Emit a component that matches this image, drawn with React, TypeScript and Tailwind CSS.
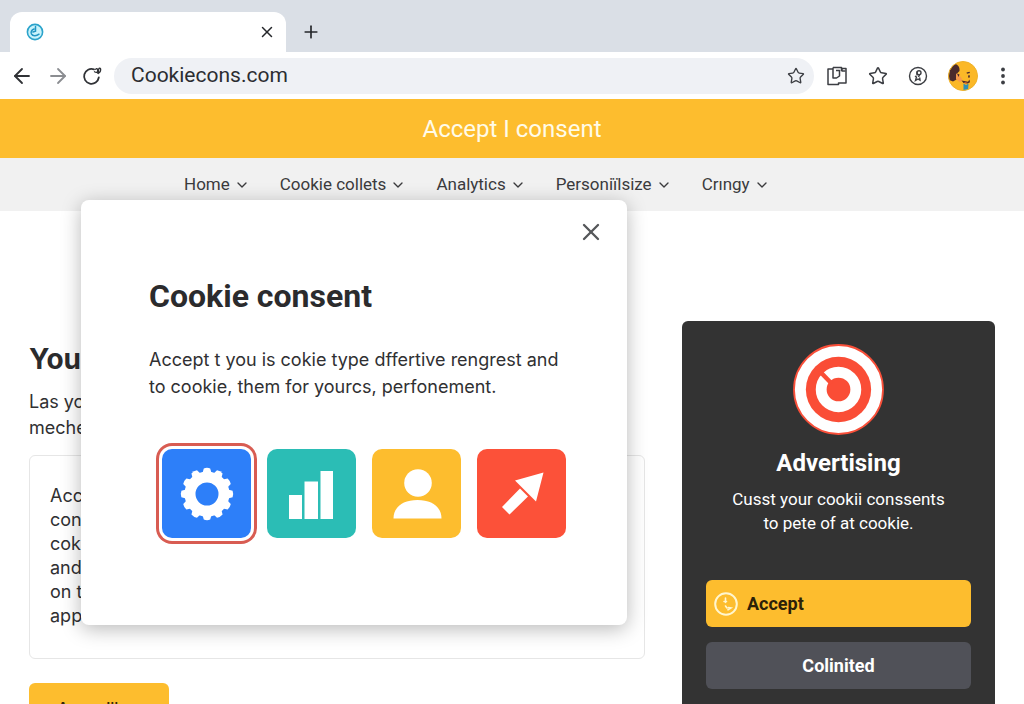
import { ArrowLeft, ArrowRight, ChevronDown, Plus, Star, X } from 'lucide-react';

const navItems = ['Home', 'Cookie collets', 'Analytics', 'Personiïlsize', 'Crıngy'];

function FaviconIcon() {
  return (
    <svg viewBox="0 0 18 18" className="size-[18px]" fill="none" aria-hidden="true">
      <circle cx="9" cy="9" r="7.6" fill="#c9f3fb" stroke="#2ba3cb" strokeWidth="1.6" />
      <path d="M9.5 3.500v4.800L7 9M8 6C5.400 7 4.600 9 5.400 10.800c1.200 2.400 5 2.400 7.600.4" stroke="#2196c4" strokeWidth="1.5" strokeLinecap="round" />
    </svg>
  );
}

function ReloadIcon() {
  return (
    <svg viewBox="0 0 20 20" className="size-5" fill="none" stroke="#303236" strokeWidth="1.8" strokeLinecap="round" aria-hidden="true">
      <path d="M12 3.400A7.400 7.400 0 1 0 16.800 11.500" />
      <path d="M12.500 5.800c2 1.200 3.200.6 3.200-1.600 0-1.800-1.700-2.200-2-.8M15.500 7c1.800.4 3-1.200 3.200-3.400.1-1.600-1.500-1.800-2-.6-.5 1.600-.2 2.800-.2 4.500" strokeWidth="1.300" />
    </svg>
  );
}

function CollectionsIcon() {
  return (
    <svg viewBox="0 0 22 22" className="size-[22px]" fill="none" stroke="#3c3e43" strokeWidth="1.5" strokeLinejoin="round" aria-hidden="true">
      <path d="M7 4H2v15.500h10.500V18H20V3.500h-4" />
      <path d="M7 2.500h8.500V6M7 2.500V13h3.500l3-2V5.500H10M16 3.500V6h3.500" />
    </svg>
  );
}

function BadgeIcon() {
  return (
    <svg viewBox="0 0 20 20" className="size-5" fill="none" stroke="#3c3e43" strokeWidth="1.4" aria-hidden="true">
      <circle cx="10" cy="10" r="8.500" />
      <circle cx="11" cy="6.800" r="2" />
      <path d="M9 5.500v4M11.500 8.800l-1 2.200M7 10l1.500 1-1 3.500 2.500-1.500 2 1.200-.3-2.700" />
    </svg>
  );
}

function Avatar() {
  return (
    <svg viewBox="0 0 30 30" className="size-[30px]" aria-hidden="true">
      <defs>
        <clipPath id="avatar-clip">
          <circle cx="15" cy="15" r="14.500" />
        </clipPath>
      </defs>
      <g clipPath="url(#avatar-clip)">
        <path fill="#fbb827" d="M0 0h30v30H0z" />
        <path fill="#4b2b2c" d="M0 3h7c3 .5 5 3 4.500 7L9 12.500l-.5 6-3.500 2-5-2z" />
        <path fill="#f79a4c" d="M8 13c2-1 3 0 3.500 1.500l2 2.500 1 3-3 1-3.500-3z" />
        <path fill="#4b2b2c" d="M9 12.500l2.500 1-1 2.500zM18.500 11.500l3-.8.500 1.200-3 .8zM20 14.500l1.800-.3v2.300l-1.500.3zM13.500 19.500l6.500 1.300 1.500-2.300.5 2.800-2.500 1.200-4-.5z" />
        <path fill="#f36c31" d="M16 21l3.500.8-1.800 1z" />
        <path fill="#2f8fb5" d="M15.500 22.500l2.500 1.500 2.500-1.500-.5 7.500h-4.500z" />
      </g>
      <circle cx="15" cy="15" r="14.500" fill="none" stroke="#efb22a" />
    </svg>
  );
}

function GearIcon() {
  return (
    <svg viewBox="-28 -28 56 56" className="size-14" fill="#fff" aria-hidden="true">
      {[0, 30, 60, 90, 120, 150, 180, 210, 240, 270, 300, 330].map((angle) => (
        <path key={angle} d="M-4.500-21L-3.200-25.600Q0-26.800 3.200-25.600L4.500-21z" transform={`rotate(${angle})`} />
      ))}
      <circle r="17" fill="none" stroke="#fff" strokeWidth="11" />
    </svg>
  );
}

function ChartIcon() {
  return (
    <svg viewBox="0 0 56 56" className="size-14" fill="#fff" aria-hidden="true">
      <path d="M5 29h13v24H5zM20.500 15.500H34V53H20.500zM36.500 5H49v48H36.500z" />
    </svg>
  );
}

function PersonIcon() {
  return (
    <svg viewBox="0 0 56 56" className="size-14" fill="#fff" aria-hidden="true">
      <circle cx="29" cy="17" r="13.800" />
      <path d="M4.500 52.500C4.500 41 14 34 28.500 34S52.500 41 52.500 52.500z" />
    </svg>
  );
}

function PointerIcon() {
  return (
    <svg viewBox="0 0 56 56" className="size-14" fill="#fff" aria-hidden="true">
      <path d="M49.500 6.500L42 35.500 21 14.500zM26 22.500L34 30.500 15.500 48.500 8 41z" />
    </svg>
  );
}

function TargetIcon() {
  return (
    <svg viewBox="0 0 92 92" className="size-[91px]" aria-hidden="true">
      <circle cx="46" cy="46" r="45" fill="#fff" stroke="#f94f39" strokeWidth="1.800" />
      <circle cx="46" cy="46" r="33" fill="#fa4d36" />
      <circle cx="46" cy="46" r="17.500" fill="none" stroke="#fff" strokeWidth="11" />
      <path d="M27 27.500L39 40" stroke="#fa4d36" strokeWidth="4.500" />
    </svg>
  );
}

function ClockIcon() {
  return (
    <svg viewBox="0 0 24 24" className="size-6" fill="none" stroke="#fff6cf" strokeWidth="2" aria-hidden="true">
      <circle cx="12" cy="12" r="10.800" />
      <path d="M11.500 6v4.500M10 9.500h2.500M11.500 14l1.500 2M14.500 15.500l2.500.5-3 1.800" strokeWidth="1.600" strokeLinecap="round" />
    </svg>
  );
}

const categories = [
  { name: 'Settings', color: 'bg-[#2d7ff9] ring-3 ring-[#d85c52] ring-offset-3', icon: <GearIcon /> },
  { name: 'Analytics', color: 'bg-[#2bbdb5]', icon: <ChartIcon /> },
  { name: 'Personal', color: 'bg-[#fdbd2e]', icon: <PersonIcon /> },
  { name: 'Marketing', color: 'bg-[#fc5139]', icon: <PointerIcon /> },
];

function BrowserBar() {
  return (
    <header className="bg-[#dadfe6] pt-3">
      <div className="flex items-end px-[10px]">
        <div className="flex h-10 w-[276px] items-center justify-between rounded-t-xl bg-white pl-4 pr-[10px]">
          <FaviconIcon />
          <button type="button" aria-label="Close tab">
            <X className="size-[18px] text-[#25272b]" />
          </button>
        </div>
        <button type="button" aria-label="New tab" className="flex h-10 items-center px-[15px]">
          <Plus className="size-5 text-[#25272b]" />
        </button>
      </div>
      <div className="flex h-[47px] items-center bg-white pl-[10px] pr-4">
        <div className="flex items-center gap-3">
          <button type="button" aria-label="Back"><ArrowLeft className="size-6 text-[#303236]" strokeWidth={1.8} /></button>
          <button type="button" aria-label="Forward"><ArrowRight className="size-6 text-[#8b8d91]" strokeWidth={1.8} /></button>
          <button type="button" aria-label="Reload"><ReloadIcon /></button>
        </div>
        <div className="ml-3 flex h-9 flex-1 items-center rounded-full bg-[#eff1f5] pl-[17px] pr-[9px]">
          <input aria-label="Address" defaultValue="Cookiecons.com" className="min-w-0 flex-1 bg-transparent font-[Roboto,sans-serif] text-[21px] text-[#2b2d31] outline-none" />
          <button type="button" aria-label="Bookmark"><Star className="size-[18px] text-[#3c3e43]" strokeWidth={1.8} /></button>
        </div>
        <div className="ml-3 flex items-center gap-5">
          <button type="button" aria-label="Collections"><CollectionsIcon /></button>
          <button type="button" aria-label="Favorites"><Star className="size-5 text-[#3c3e43]" strokeWidth={1.8} /></button>
          <button type="button" aria-label="Extensions"><BadgeIcon /></button>
          <button type="button" aria-label="Profile"><Avatar /></button>
          <button type="button" aria-label="Menu">
            <svg viewBox="0 0 10 20" className="h-5 w-[10px]" fill="#3c3e43" aria-hidden="true">
              <circle cx="5" cy="3.500" r="1.900" />
              <circle cx="5" cy="10" r="1.900" />
              <circle cx="5" cy="16.500" r="1.900" />
            </svg>
          </button>
        </div>
      </div>
    </header>
  );
}

function ConsentDialog() {
  return (
    <section role="dialog" aria-labelledby="consent-title" className="absolute left-[81px] top-[42px] w-[546px] rounded-lg bg-white px-[68px] pb-[87px] pt-20 shadow-[0_4px_20px_rgba(0,0,0,0.28)]">
      <button type="button" aria-label="Close" className="absolute right-[22px] top-[18px]">
        <X className="size-7 text-[#55575a]" />
      </button>
      <h2 id="consent-title" className="font-[Roboto,sans-serif] text-[32px] leading-8 font-bold text-[#2b2b2d]">Cookie consent</h2>
      <p className="mt-[34px] text-lg leading-[27px] whitespace-nowrap text-[#303032]">
        Accept t you is cokie type dffertive rengrest and<br />
        to cookie, them for yourcs, perfonement.
      </p>
      <div className="mt-[49px] ml-[13px] flex gap-4">
        {categories.map((category) => (
          <button
            key={category.name}
            type="button"
            aria-label={category.name}
            className={`flex size-[89px] shrink-0 items-center justify-center rounded-[10px] ${category.color}`}
          >
            {category.icon}
          </button>
        ))}
      </div>
    </section>
  );
}

export default function App() {
  return (
    <div className="h-screen overflow-hidden bg-white font-[Inter,sans-serif] text-[#303032]">
      <BrowserBar />
      <div className="flex h-[59px] items-center justify-center bg-[#fdbd2e] font-[Roboto,sans-serif] text-2xl text-[#fffbe8]">
        Accept I consent
      </div>
      <div className="relative">
        <nav className="flex h-[53px] items-center gap-[30px] bg-[#f1f1f1] pl-[184px] font-[Roboto,sans-serif] text-[17px] text-[#3b3b3d]">
          {navItems.map((item) => (
            <a key={item} href="#" className="flex items-center gap-1">
              {item} <ChevronDown className="size-4" />
            </a>
          ))}
        </nav>
        <main className="flex items-start gap-[37px] px-[29px]">
          <div className="min-w-0 flex-1 pt-[130px]">
            <h1 className="text-[28px] leading-9 font-bold text-[#2b2b2d]">You</h1>
            <p className="mt-3 text-lg leading-[26px]">Las your<br />meche</p>
            <div className="mt-[14px] rounded-md border border-[#e6e6e6] px-5 pt-7 pb-[30px] text-lg leading-6">
              Acc<br />con<br />cok<br />and<br />on t<br />app
            </div>
            <button type="button" className="mt-6 h-[50px] w-[140px] rounded-md bg-[#fdbd2e] font-medium text-[#33270a]">
              Accepill us
            </button>
          </div>
          <aside className="mt-[110px] flex w-[313px] flex-col items-center rounded-md bg-[#333333] px-6 pt-[23px] pb-6 text-white">
            <TargetIcon />
            <h2 className="mt-3 font-[Roboto,sans-serif] text-2xl leading-8 font-bold">Advertising</h2>
            <p className="mt-2 text-center font-[Roboto,sans-serif] text-[17px] leading-6">
              Cusst your cookii conssents<br />to pete of at cookie.
            </p>
            <button type="button" className="mt-[45px] flex h-[47px] w-full items-center gap-[9px] rounded-md bg-[#fdbd2e] px-2 font-[Roboto,sans-serif] text-lg font-bold text-[#2c2108]">
              <ClockIcon />
              Accept
            </button>
            <button type="button" className="mt-[15px] h-[47px] w-full rounded-md bg-[#505158] font-[Roboto,sans-serif] text-lg font-bold">
              Colinited
            </button>
          </aside>
        </main>
        <ConsentDialog />
      </div>
    </div>
  );
}
